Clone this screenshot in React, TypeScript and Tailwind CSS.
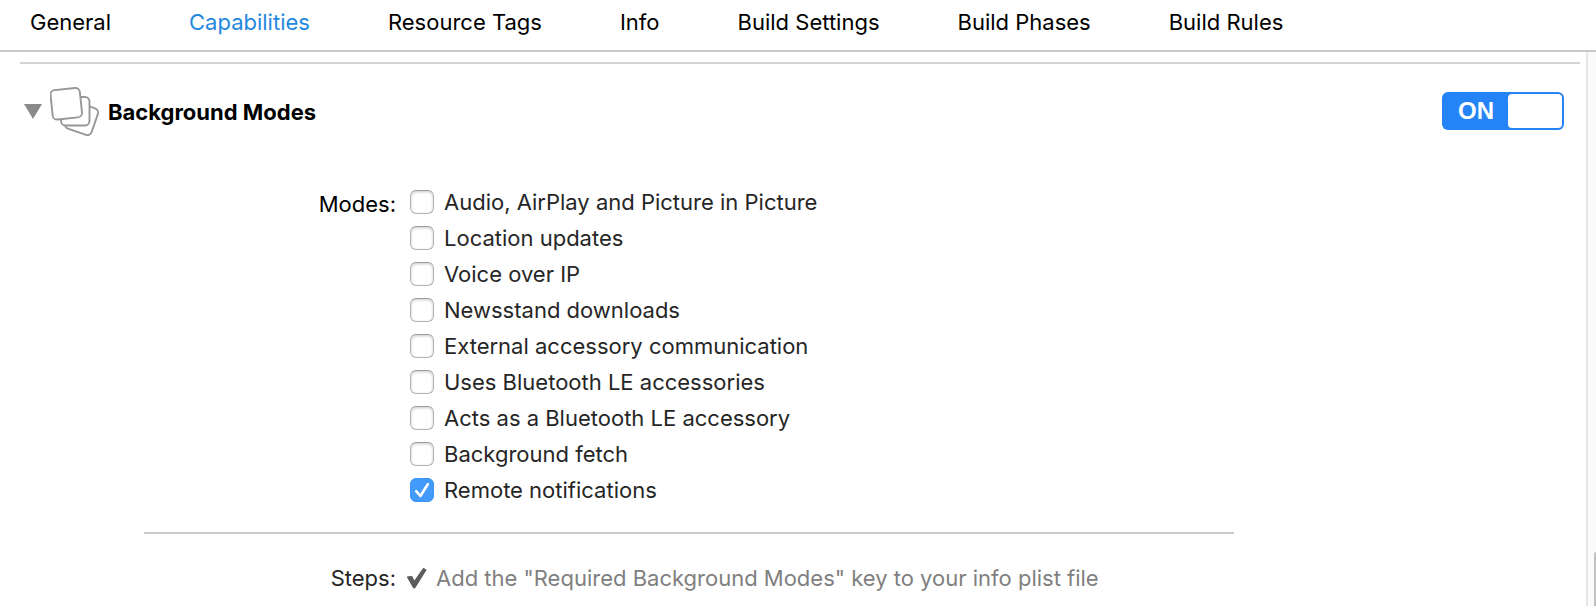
import { useState } from 'react';

const TABS = ['General', 'Capabilities', 'Resource Tags', 'Info', 'Build Settings', 'Build Phases', 'Build Rules'];

const MODES = [
  'Audio, AirPlay and Picture in Picture',
  'Location updates',
  'Voice over IP',
  'Newsstand downloads',
  'External accessory communication',
  'Uses Bluetooth LE accessories',
  'Acts as a Bluetooth LE accessory',
  'Background fetch',
  'Remote notifications',
];

function TabBar() {
  const [active, setActive] = useState('Capabilities');

  return (
    <nav className="flex h-[52px] gap-[78px] whitespace-nowrap border-b-2 border-[#c9c9c9] pl-[30px] pb-1.5">
      {TABS.map((tab) => (
        <button
          key={tab}
          type="button"
          onClick={() => setActive(tab)}
          className={tab === active ? 'text-[#2488e0]' : 'text-black'}
        >
          {tab}
        </button>
      ))}
    </nav>
  );
}

// Three stacked, rotated cards
function ModesIcon() {
  return (
    <svg width="50" height="52" viewBox="0 -2 50 52" fill="#fff" stroke="#979797" strokeWidth="1.9" aria-hidden="true">
      <rect x="17.5" y="17.5" width="28" height="28" rx="4.5" transform="rotate(19 31.5 31.5)" />
      <rect x="11" y="10" width="28.5" height="28.5" rx="4.5" />
      <rect x="1.5" y="2" width="29.5" height="29.5" rx="4.5" transform="rotate(-6 16.25 16.75)" />
    </svg>
  );
}

function SectionHeader() {
  const [on, setOn] = useState(true);

  return (
    <header className="flex h-[52px] items-center">
      <button type="button" aria-label="Collapse section" className="ml-1">
        <svg width="18" height="15" viewBox="0 0 18 15" fill="#8a8a8a">
          <path d="M0 0h18L9 15z" />
        </svg>
      </button>
      <span className="ml-2">
        <ModesIcon />
      </span>
      <h2 className="ml-2 pt-0.5 font-bold text-black">Background Modes</h2>
      <button
        type="button"
        role="switch"
        aria-checked={on}
        aria-label="Background Modes"
        onClick={() => setOn(!on)}
        className="mr-4 ml-auto flex h-[38px] w-[122px] items-stretch rounded-md bg-[#2484f6] p-0.5"
      >
        <span className="flex-1 self-center text-center font-['Liberation_Sans'] text-2xl font-bold text-white">
          {on ? 'ON' : 'OFF'}
        </span>
        <span className="w-[54px] rounded bg-white" />
      </button>
    </header>
  );
}

function ModeCheckbox({ label, defaultChecked }: { label: string; defaultChecked: boolean }) {
  return (
    <label className="flex h-9 items-center gap-2.5">
      <span className="grid size-6 shrink-0">
        <input
          type="checkbox"
          defaultChecked={defaultChecked}
          className="peer col-start-1 row-start-1 size-6 appearance-none rounded-md border border-[#b4b4b4] border-t-[#9c9c9c] bg-white shadow-[inset_0_1px_3px_#c8c8c8] checked:border-[#3b94f7] checked:bg-[#429bfa] checked:shadow-none"
        />
        <svg
          viewBox="0 0 24 24"
          fill="none"
          stroke="#fff"
          strokeWidth="2.6"
          strokeLinecap="round"
          strokeLinejoin="round"
          className="pointer-events-none invisible col-start-1 row-start-1 size-6 peer-checked:visible"
        >
          <path d="M6.2 13.2l4.2 4.8L17.8 6.2" />
        </svg>
      </span>
      {label}
    </label>
  );
}

export default function App() {
  return (
    <div className="flex min-h-screen flex-col bg-white font-['Inter',sans-serif] text-[22px] leading-7 text-[#262626]">
      <TabBar />

      <div className="flex flex-1">
        <main className="min-w-0 flex-1 pt-2.5 pr-1.5 pl-5">
          <section className="border-t-2 border-[#d3d3d3] pt-[21px]">
            <SectionHeader />

            <div role="group" aria-labelledby="modes-label" className="mt-[47px] flex">
              <span id="modes-label" className="mt-1.5 w-[376px] text-right text-black">
                Modes:
              </span>
              <div className="ml-3.5">
                {MODES.map((mode) => (
                  <ModeCheckbox key={mode} label={mode} defaultChecked={mode === 'Remote notifications'} />
                ))}
              </div>
            </div>

            <hr className="mt-6 mr-[346px] ml-[124px] border-t-2 border-[#cacaca]" />

            <div className="mt-[30px] flex">
              <span className="w-[376px] text-right">Steps:</span>
              <svg width="22" height="24" viewBox="0 0 22 24" fill="#5c5c5c" className="ml-2.5 mt-0.5" aria-hidden="true">
                <path d="M.7 10.7q3-1 5.6-.4l2 4.2L17.3 1.7l3.4 2.1L9.6 21.5l-1.4 1.3-1.4-1.3z" />
              </svg>
              <p className="ml-2 text-[#808080]">Add the "Required Background Modes" key to your info plist file</p>
            </div>
          </section>
        </main>

        {/* Scroller track with the thumb peeking in */}
        <div className="flex w-2.5 flex-col items-end justify-end border-l-2 border-[#e6e6e6] bg-[#fafafa]">
          <div className="h-[54px] w-0.5 rounded-tl-sm bg-[#c1c1c1]" />
        </div>
      </div>
    </div>
  );
}
